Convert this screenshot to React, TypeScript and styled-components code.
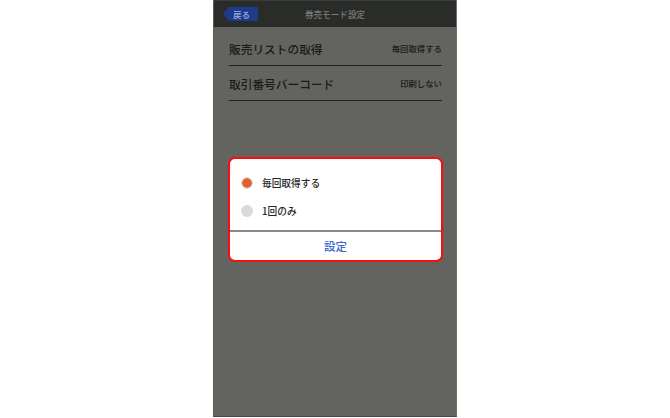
import React from "react";
import styled, { createGlobalStyle } from "styled-components";

const Global = createGlobalStyle`
  html, body { margin: 0; padding: 0; background: #ffffff; }
  body { font-family: "Noto Sans CJK JP", "Noto Sans", sans-serif; }
  * { box-sizing: border-box; }
`;

const Page = styled.div`
  width: 670px;
  height: 418px;
  display: flex;
  justify-content: center;
`;

const Screen = styled.div`
  position: relative;
  width: 244px;
  height: 417px;
  background: #636460;
  border-left: 1px solid #5b5c59;
  border-right: 1px solid #6a6b68;
  border-bottom: 1px solid #474846;
  display: flex;
  flex-direction: column;
`;

const Header = styled.div`
  height: 27px;
  background: #2a2c2a;
  border-top: 1px solid #3a3c3a;
  display: grid;
  grid-template-columns: 1fr auto 1fr;
  align-items: center;
`;

const BackButton = styled.div`
  justify-self: start;
  margin-left: 9px;
  width: 35px;
  height: 14px;
  background: #1f3c8c;
  clip-path: polygon(6px 0, 100% 0, 100% 100%, 6px 100%, 0 50%);
  color: #9fb2dc;
  font-size: 8.5px;
  font-weight: 500;
  line-height: 14px;
  padding-left: 10px;
`;

const Title = styled.div`
  color: #7b7d7b;
  font-size: 8.6px;
  font-weight: 500;
`;

const List = styled.div`
  margin: 4px 14px 0 15px;
  display: flex;
  flex-direction: column;
`;

const Row = styled.div`
  height: 35px;
  border-bottom: 1.5px solid #202120;
  display: flex;
  align-items: center;
  justify-content: space-between;
`;

const Label = styled.span`
  font-size: 11.7px;
  font-weight: 500;
  color: #181918;
`;

const Value = styled.span`
  font-size: 8.4px;
  font-weight: 500;
  color: #181918;
`;

const Dialog = styled.div`
  position: absolute;
  left: 14px;
  top: 157px;
  width: 215px;
  height: 105px;
  background: #ffffff;
  border: 2px solid #ff0a0a;
  border-radius: 7px;
  display: flex;
  flex-direction: column;
  overflow: hidden;
`;

const Options = styled.div`
  flex: 1;
  padding: 10px 0 0 11px;
  display: flex;
  flex-direction: column;
`;

const Option = styled.div`
  height: 28px;
  display: flex;
  align-items: center;
  gap: 9px;
`;

const Radio = styled.span<{ $checked?: boolean }>`
  width: 12px;
  height: 12px;
  border-radius: 50%;
  background: ${(p) => (p.$checked ? "#e2622e" : "#dadada")};
  border: ${(p) => (p.$checked ? "1.5px solid #dcdcdc" : "none")};
  background-clip: padding-box;
`;

const OptionText = styled.span`
  font-size: 9.7px;
  font-weight: 500;
  color: #262626;
`;

const Divider = styled.div`
  height: 2px;
  background: #8a8a8a;
`;

const SetButton = styled.div`
  height: 28px;
  display: flex;
  align-items: center;
  justify-content: center;
  color: #3a66d0;
  font-size: 11.5px;
  font-weight: 500;
`;

export default function App() {
  return (
    <>
      <Global />
      <Page>
        <Screen>
          <Header>
            <BackButton>戻る</BackButton>
            <Title>券売モード設定</Title>
            <span />
          </Header>
          <List>
            <Row>
              <Label>販売リストの取得</Label>
              <Value>毎回取得する</Value>
            </Row>
            <Row>
              <Label>取引番号バーコード</Label>
              <Value>印刷しない</Value>
            </Row>
          </List>
          <Dialog>
            <Options>
              <Option>
                <Radio $checked />
                <OptionText>毎回取得する</OptionText>
              </Option>
              <Option>
                <Radio />
                <OptionText>1回のみ</OptionText>
              </Option>
            </Options>
            <Divider />
            <SetButton>設定</SetButton>
          </Dialog>
        </Screen>
      </Page>
    </>
  );
}
